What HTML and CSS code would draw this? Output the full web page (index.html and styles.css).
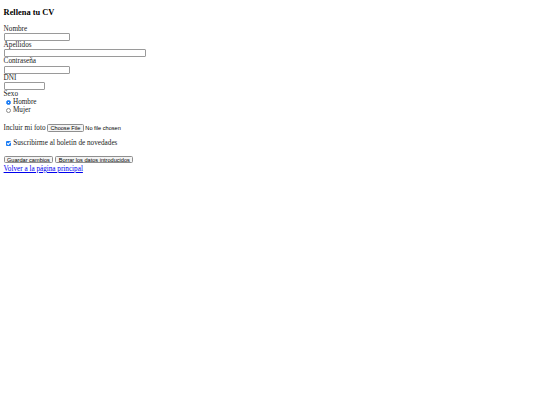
FILE: index.html
```html
<!DOCTYPE html>
<html lang="es">
<head>
<meta charset="utf-8">
<title>Rellena tu CV</title>
<link rel="stylesheet" href="styles.css">
</head>
<body>
<main class="page">
  <h3 class="title">Rellena tu CV</h3>
  <form class="cv-form">
    <label class="field-label" for="nombre">Nombre</label>
    <input class="text-input w-short" type="text" id="nombre">
    <label class="field-label" for="apellidos">Apellidos</label>
    <input class="text-input w-long" type="text" id="apellidos">
    <label class="field-label" for="pass">Contraseña</label>
    <input class="text-input w-short" type="password" id="pass">
    <label class="field-label" for="dni">DNI</label>
    <input class="text-input w-dni" type="text" id="dni">
    <div class="field-label">Sexo</div>
    <label class="choice"><input class="radio" type="radio" name="sexo" checked>Hombre</label>
    <label class="choice"><input class="radio" type="radio" name="sexo">Mujer</label>

    <p class="row row-file">Incluir mi foto
      <label class="file"><input class="file-input" type="file"><span class="btn">Choose File</span><span class="file-name">No file chosen</span></label>
    </p>

    <p class="row row-check"><label class="check-row"><input class="checkbox" type="checkbox" checked>Suscribirme al boletín de novedades</label></p>

    <div class="buttons">
      <button class="btn" type="submit">Guardar cambios</button>
      <button class="btn" type="reset">Borrar los datos introducidos</button>
    </div>
  </form>
  <a class="back" href="#">Volver a la página principal</a>
</main>
</body>
</html>
```

FILE: styles.css
```css
html, body {
  margin: 0;
  padding: 0;
  background: #ffffff;
}
.page {
  padding: 0 3.6px;
  font-family: "Liberation Serif", "Times New Roman", serif;
  font-size: 7.2px;
  line-height: 8.28px;
  color: #222222;
}
.title {
  font-size: 8.4px;
  line-height: 9.7px;
  font-weight: bold;
  color: #000;
  margin: 8.4px 0 6.8px;
}
.cv-form {
  margin: 0;
}
.field-label {
  display: block;
  height: 8.28px;
}
.text-input {
  display: block;
  box-sizing: border-box;
  height: 8px;
  margin: 0;
  padding: 0 1px;
  border: 0.5px solid #9a9a9a;
  border-radius: 1px;
  font-size: 6px;
  background: #fff;
}
.w-short { width: 66px; }
.w-long { width: 142px; }
.w-dni { width: 41px; }
.choice {
  display: flex;
  align-items: center;
  height: 8.28px;
}
.radio {
  appearance: none;
  -webkit-appearance: none;
  box-sizing: border-box;
  width: 5.2px;
  height: 5.2px;
  margin: 0 1.8px 0 2.4px;
  border: 0.5px solid #8d8d8d;
  border-radius: 50%;
  background: #fff;
}
.radio:checked {
  border-color: #1a7cf5;
  background: radial-gradient(circle, #ffffff 0 0.5px, #1a7cf5 0.8px);
}
.row {
  margin: 0;
  display: flex;
  align-items: center;
  min-height: 9px;
}
.row-file {
  margin-top: 8.6px;
}
.row-check {
  margin-top: 6.6px;
}
.file {
  display: inline-flex;
  align-items: center;
  margin-left: 1.6px;
}
.file-input {
  display: none;
}
.file-name {
  font-family: "Liberation Sans", Arial, sans-serif;
  font-size: 5.6px;
  color: #000;
  margin-left: 1.6px;
}
.btn {
  display: inline-flex;
  align-items: center;
  box-sizing: border-box;
  font-family: "Liberation Sans", Arial, sans-serif;
  font-size: 5.6px;
  line-height: 6px;
  height: 7.6px;
  padding: 0 2.4px;
  margin: 0;
  color: #000;
  background: #f4f4f4;
  border: 0.5px solid #8f8f8f;
  border-radius: 1.5px;
}
.check-row {
  display: flex;
  align-items: center;
}
.checkbox {
  appearance: none;
  -webkit-appearance: none;
  position: relative;
  box-sizing: border-box;
  width: 5.2px;
  height: 5.2px;
  margin: 0 2px 0 2.4px;
  border-radius: 1px;
  background: #1a7cf5;
}
.checkbox::after {
  content: "";
  position: absolute;
  left: 1.7px;
  top: 0.6px;
  width: 1.3px;
  height: 2.6px;
  border: solid #fff;
  border-width: 0 0.7px 0.7px 0;
  transform: rotate(45deg);
}
.buttons {
  display: flex;
  gap: 2px;
  margin-top: 6.2px;
  padding-top: 1.6px;
}
.back {
  display: block;
  margin-top: 1.4px;
  color: #0000ee;
  text-decoration: underline;
}
```
